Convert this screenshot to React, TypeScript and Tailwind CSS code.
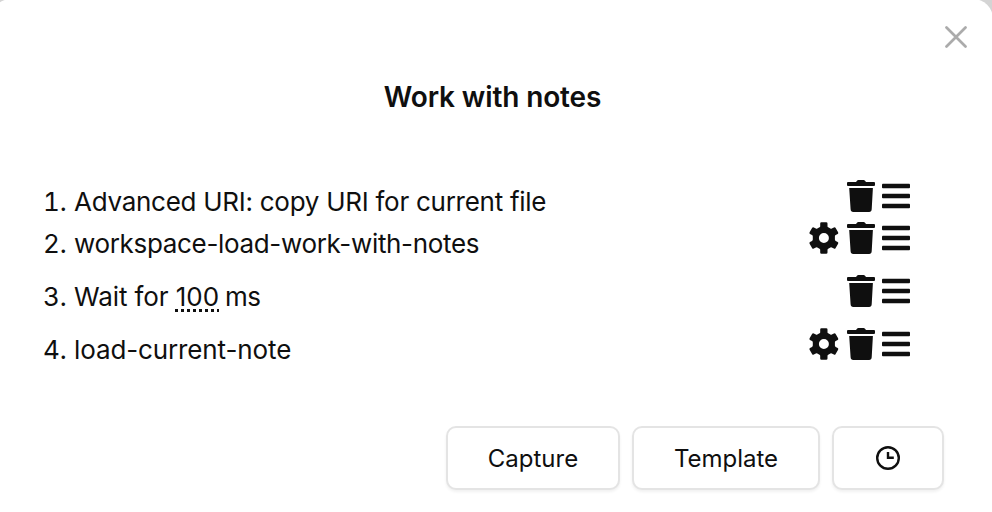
import React from "react";

function Gear() {
  return (
    <svg width="30" height="32" viewBox="0 0 30 32" fill="#0f0f0f" aria-hidden="true">
      <path
        fillRule="evenodd"
        d="M11.200 1.500Q11.200.3 12.400.3h4.800q1.300 0 1.300 1.200v2.700q0 .8.700 1.100l2.200 1.300q.7.4 1.400 0l2.100-1.200q1-.5 1.600.4l2.600 4.500q.6 1-.4 1.600l-2 1.200q-.8.500-.8 1.300v3.200q0 .8.8 1.300l2 1.200q1 .6.4 1.600l-2.600 4.500q-.6.9-1.600.4l-2.100-1.200q-.7-.4-1.400 0l-2.200 1.300q-.7.3-.7 1.100v2.700q0 1.200-1.300 1.200h-4.800q-1.200 0-1.200-1.200v-2.700q0-.8-.7-1.100l-2.200-1.300q-.7-.4-1.400 0l-2.100 1.200q-1 .5-1.600-.4L.6 21.700q-.6-1 .4-1.600l2-1.200q.8-.5.800-1.300v-3.200q0-.8-.8-1.300l-2-1.200q-1-.6-.4-1.600l2.600-4.500q.6-.9 1.600-.4l2.100 1.200q.7.400 1.400 0l2.200-1.300q.7-.3.700-1.100zM14.900 11a5 5 0 1 0 0 10a5 5 0 1 0 0-10z"
      />
    </svg>
  );
}

function Trash() {
  return (
    <svg width="28" height="32" viewBox="0 0 28 32" fill="#0f0f0f" aria-hidden="true">
      <path d="M1 2h8l1-1.300Q10.500 0 11.400 0h5.200q.9 0 1.400.7L19 2h8q1 0 1 1v2q0 1-1 1H1Q0 6 0 5V3q0-1 1-1zM2.200 8h23.700l-1.200 21.300Q24.500 32 22.100 32H6.200Q3.800 32 3.600 29.300z" />
    </svg>
  );
}

function Handle() {
  return (
    <svg width="28" height="32" viewBox="0 0 28 32" fill="#0f0f0f" aria-hidden="true">
      <rect y="3.700" width="28" height="4.500" rx="0.900" />
      <rect y="13.700" width="28" height="4.500" rx="0.900" />
      <rect y="23.700" width="28" height="4.500" rx="0.900" />
    </svg>
  );
}

function Row({ n, children, gear, className }: { n: number; children: React.ReactNode; gear?: boolean; className: string }) {
  return (
    <li className={`flex items-start justify-between ${className}`}>
      <span className="flex whitespace-pre pt-[6px] text-[26px] leading-8">
        <span className="w-[31px] tabular-nums">{n}.</span>
        {children}
      </span>
      <span className="flex">
        {gear && <span className="mr-2"><Gear /></span>}
        <span className="mr-[7px]"><Trash /></span>
        <Handle />
      </span>
    </li>
  );
}

const button =
  "flex h-16 items-center justify-center rounded-[10px] border-2 border-[#e4e4e4] bg-white text-[24px] shadow-[0_2px_3px_rgba(0,0,0,0.06)]";

export default function App() {
  return (
    <div className="h-[512px] w-[992px] overflow-hidden bg-[#d4d4d4] font-['Inter',sans-serif] text-[#0f0f0f]">
      <div className="-ml-[9px] -mt-px h-[513px] w-[1002px] rounded-t-[20px] bg-white pl-[9px] pt-px">
        <div className="flex h-[78px] justify-end pr-[26px] pt-[26px]">
          <svg width="22" height="22" viewBox="0 0 22 22" stroke="#ababab" strokeWidth="2.700" strokeLinecap="round" aria-label="Close">
            <path d="M1.500 1.500l19 19M20.500 1.500l-19 19" />
          </svg>
        </div>
        <h1 className="w-[985px] text-center text-[28px] font-semibold leading-[38px] tracking-[-0.13px]">Work with notes</h1>
        <ol className="mt-16 pl-[43px] pr-[83px]">
          <Row n={1} className="h-[42px]"><span className="tracking-[-0.27px]">Advanced URI: copy URI for current file</span></Row>
          <Row n={2} gear className="h-[53px]"><span className="tracking-[-0.33px]">workspace-load-work-with-notes</span></Row>
          <Row n={3} className="h-[53px]">
            <span className="tracking-[-0.1px]">Wait for </span>
            <span className="underline decoration-dotted decoration-[3px] underline-offset-[3px]">100</span>
            <span className="ml-[6px] tracking-[-0.6px]">ms</span>
          </Row>
          <Row n={4} gear className="h-[53px]"><span className="tracking-[-0.12px]">load-current-note</span></Row>
        </ol>
        <div className="mt-[45px] flex justify-end gap-3 pr-[49px]">
          <button className={`${button} w-[174px] pt-[2px]`}>Capture</button>
          <button className={`${button} w-[188px] pt-[2px]`}>Template</button>
          <button className={`${button} w-28`} aria-label="History">
            <svg width="24" height="24" viewBox="0 0 24 24" fill="none" stroke="#0f0f0f" aria-hidden="true">
              <circle cx="12" cy="12" r="10.800" strokeWidth="2.400" />
              <path d="M12 6v5.700h5.800" strokeWidth="2.400" />
            </svg>
          </button>
        </div>
      </div>
    </div>
  );
}
